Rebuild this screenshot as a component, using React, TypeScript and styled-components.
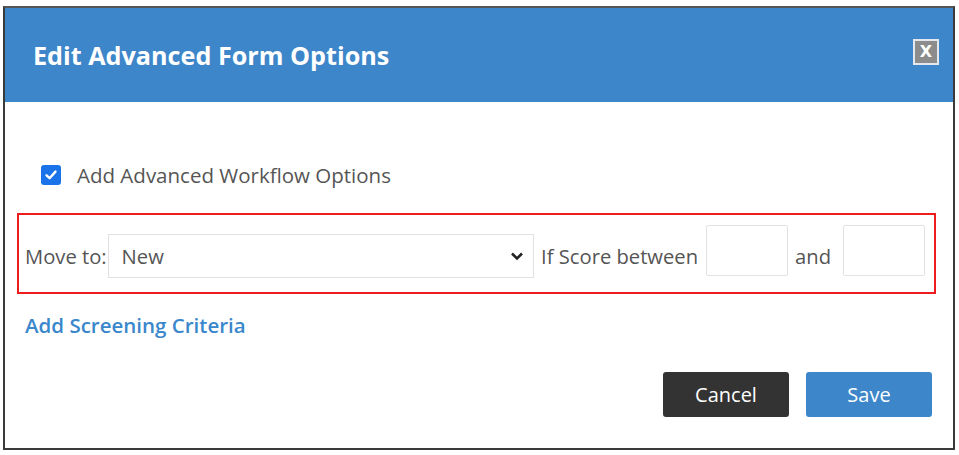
import React, { ReactElement, useState } from 'react'
import styled, { createGlobalStyle } from 'styled-components'

const GlobalStyle = createGlobalStyle`
  html, body {
    margin: 0;
    padding: 0;
    background: #ffffff;
    font-family: 'Open Sans', 'Liberation Sans', sans-serif;
  }
`

const Page = styled.div`
  padding: 6px 0 0 3px;
`

const Dialog = styled.div`
  width: 952px;
  height: 444px;
  box-sizing: border-box;
  border: 2px solid #3a3a3a;
  border-top-color: #555;
  display: flex;
  flex-direction: column;
  background: #fff;
`

const Header = styled.div`
  height: 94px;
  background: #3d86c9;
  display: flex;
  align-items: center;
  justify-content: space-between;
  padding: 0 14px 0 28px;
  flex-shrink: 0;
`

const Title = styled.h1`
  margin: 0;
  color: #fff;
  font-size: 25.2px;
  font-weight: 700;
  letter-spacing: 0;
`

const CloseButton = styled.button`
  width: 26px;
  height: 26px;
  box-sizing: border-box;
  border: 2px solid #e4e8ee;
  background: #8c8c8c;
  color: #fff;
  font-family: 'DejaVu Sans', sans-serif;
  font-weight: 700;
  font-size: 16px;
  line-height: 1;
  padding: 0;
  display: flex;
  align-items: center;
  justify-content: center;
  margin-top: -6px;
`

const Body = styled.div`
  flex: 1;
  display: flex;
  flex-direction: column;
  padding: 0 17px 0 12px;
`

const CheckRow = styled.label`
  display: flex;
  align-items: center;
  gap: 16px;
  margin: 61px 0 0 24px;
  height: 24px;
  color: #555;
  font-size: 20.5px;
`

const Check = styled.span`
  width: 20px;
  height: 20px;
  border-radius: 3px;
  background: #1a73e8;
  display: flex;
  align-items: center;
  justify-content: center;
`

const RuleBox = styled.div`
  margin-top: 26px;
  height: 81px;
  box-sizing: border-box;
  border: 2px solid #ee1c1c;
  display: flex;
  align-items: center;
  padding: 5px 9px 0 6px;
  color: #555;
  font-size: 20.2px;
`

const Text = styled.span<{ $space?: number }>`
  margin-left: ${p => p.$space ?? 0}px;
  white-space: nowrap;
`

const SelectBox = styled.div`
  width: 427px;
  height: 44px;
  box-sizing: border-box;
  border: 1px solid #e2e2e2;
  display: flex;
  align-items: center;
  justify-content: space-between;
  padding: 0 9px 0 13px;
  color: #555;
  margin-left: 1px;
`

const ScoreInput = styled.input<{ $space: number }>`
  width: 82px;
  height: 51px;
  box-sizing: border-box;
  border: 1px solid #e2e2e2;
  border-radius: 2px;
  margin: -11px 0 0 ${p => p.$space}px;
`

const Link = styled.a`
  margin: 17px 0 0 8px;
  color: #3a87cc;
  font-weight: 600;
  font-size: 20.5px;
  text-decoration: none;
  cursor: pointer;
  align-self: flex-start;
`

const Footer = styled.div`
  margin-top: 33px;
  display: flex;
  justify-content: flex-end;
  gap: 17px;
  padding-right: 4px;
`

const Button = styled.button<{ $primary?: boolean }>`
  width: 126px;
  height: 45px;
  border: none;
  border-radius: 3px;
  background: ${p => (p.$primary ? '#3d86c9' : '#333333')};
  color: #fff;
  font-family: 'Open Sans', 'Liberation Sans', sans-serif;
  font-size: 20px;
  cursor: pointer;
`

const App: React.FC = (): ReactElement => {
  const [low, setLow] = useState('')
  const [high, setHigh] = useState('')

  return (
    <>
      <GlobalStyle />
      <Page>
        <Dialog>
          <Header>
            <Title>Edit Advanced Form Options</Title>
            <CloseButton aria-label="Close">X</CloseButton>
          </Header>
          <Body>
            <CheckRow>
              <Check>
                <svg width="14" height="14" viewBox="0 0 14 14">
                  <path d="M2.5 7.3 L5.6 10.2 L11.5 3.6" fill="none" stroke="#fff" strokeWidth="2.4" strokeLinecap="round" strokeLinejoin="round" />
                </svg>
              </Check>
              Add Advanced Workflow Options
            </CheckRow>
            <RuleBox>
              <Text>Move to:</Text>
              <SelectBox>
                <span>New</span>
                <svg width="14" height="10" viewBox="0 0 14 10">
                  <path d="M2 2.5 L7 7.5 L12 2.5" fill="none" stroke="#222" strokeWidth="2.6" strokeLinejoin="miter" />
                </svg>
              </SelectBox>
              <Text $space={7}>If Score between</Text>
              <ScoreInput $space={8} value={low} onChange={e => setLow(e.target.value)} />
              <Text $space={7}>and</Text>
              <ScoreInput $space={12} value={high} onChange={e => setHigh(e.target.value)} />
            </RuleBox>
            <Link>Add Screening Criteria</Link>
            <Footer>
              <Button>Cancel</Button>
              <Button $primary>Save</Button>
            </Footer>
          </Body>
        </Dialog>
      </Page>
    </>
  )
}

export default App
